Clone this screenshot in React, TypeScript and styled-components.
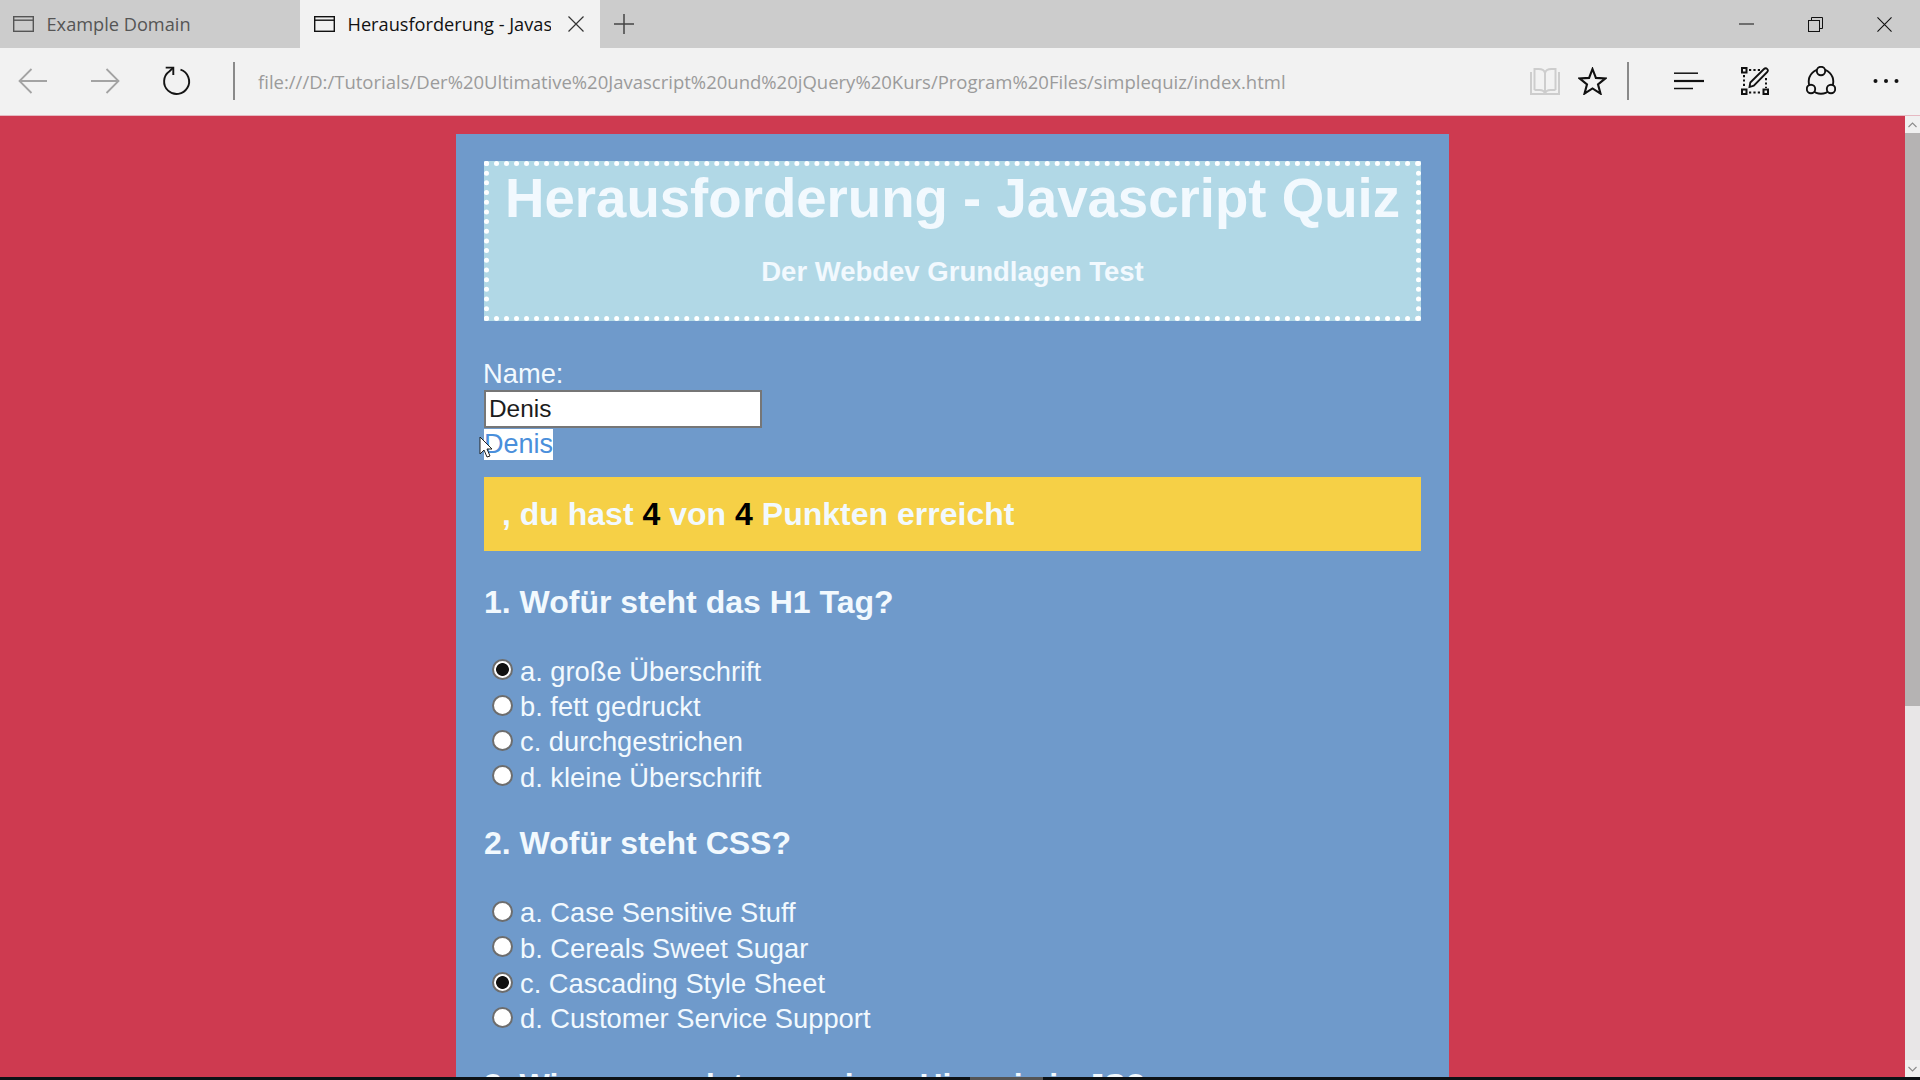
import React from "react";
import styled, { createGlobalStyle } from "styled-components";

const GlobalStyle = createGlobalStyle`
  html, body {
    margin: 0;
    height: 100%;
    overflow: hidden;
    background: #ce3a50;
  }
  * {
    box-sizing: border-box;
  }
`;

const Shell = styled.div`
  display: flex;
  flex-direction: column;
  width: 100vw;
  height: 100vh;
  overflow: hidden;
  position: relative;
`;

/* browser chrome */

const TabStrip = styled.div`
  display: flex;
  align-items: stretch;
  flex: 0 0 48px;
  background: #cccccc;
`;

const Tab = styled.div<{ $active?: boolean }>`
  display: flex;
  align-items: center;
  width: 300px;
  padding-left: ${(p) => (p.$active ? "14px" : "13px")};
  background: ${(p) => (p.$active ? "#f2f2f2" : "transparent")};
  color: ${(p) => (p.$active ? "#111111" : "#555555")};
`;

const TabTitle = styled.span`
  width: 203px;
  margin-left: 12.5px;
  overflow: hidden;
  white-space: nowrap;
  font-family: "Open Sans", "Liberation Sans", sans-serif;
  font-size: 18.2px;
`;

const TabClose = styled.span`
  display: flex;
  margin-left: 17px;
`;

const NewTab = styled.div`
  display: flex;
  align-items: center;
  margin-left: 14px;
`;

const WindowControls = styled.div`
  display: flex;
  margin-left: auto;
  padding-right: 1.5px;
`;

const WindowButton = styled.div`
  display: flex;
  align-items: center;
  justify-content: center;
  width: 69px;
`;

const Toolbar = styled.div`
  display: flex;
  align-items: center;
  flex: 0 0 68px;
  padding: 0 21px 2px 18px;
  background: #f2f2f2;
  border-bottom: 1px solid #e6b9c2;
`;

const NavGroup = styled.div`
  display: flex;
  align-items: center;
  gap: 42px;
`;

const Divider = styled.div<{ $left: number; $right: number }>`
  width: 2px;
  height: 38px;
  margin: 0 ${(p) => p.$right}px 0 ${(p) => p.$left}px;
  background: #8a8a8a;
`;

const Address = styled.div`
  flex: 1;
  padding: 2px 0 0 1px;
  color: #9b9b9b;
  font-family: "Open Sans", "Liberation Sans", sans-serif;
  font-size: 18.5px;
  white-space: nowrap;
`;

const ActionGroup = styled.div<{ $gap: number }>`
  display: flex;
  align-items: center;
  gap: ${(p) => p.$gap}px;
`;

/* page area */

const PageArea = styled.div`
  display: flex;
  flex: 1;
  min-height: 0;
`;

const Viewport = styled.div`
  flex: 1;
  min-width: 0;
  overflow: hidden;
  background: #ce3a50;
`;

const Scrollbar = styled.div`
  display: flex;
  flex-direction: column;
  flex: 0 0 15px;
  background: #e8e6e7;
`;

const ScrollButton = styled.div`
  display: flex;
  align-items: center;
  justify-content: center;
  flex: 0 0 17px;
  background: #f0f0f0;
`;

const ScrollTrack = styled.div`
  flex: 1;
`;

const ScrollThumb = styled.div`
  flex: 0 0 573px;
  background: #b5b3b3;
`;

const BottomEdge = styled.div`
  display: flex;
  flex: 0 0 3px;
  padding-left: 970px;
  background: #0d1216;
`;

const EdgeSegment = styled.div`
  width: 73px;
  background: #555555;
`;

const Panel = styled.main`
  width: 993px;
  margin: 18px auto 0;
  padding: 27px 28px 0;
  background: #6f9acb;
  color: #f2f9fe;
  font-family: "Liberation Sans", Arial, sans-serif;
`;

const Banner = styled.header`
  height: 160px;
  border: 5px dotted #ffffff;
  background: #b1d8e6;
  background-clip: border-box;
  text-align: center;
`;

const Title = styled.h1`
  margin: 0;
  padding-top: 2px;
  font-size: 54.6px;
  line-height: 62px;
  font-weight: bold;
  white-space: nowrap;
`;

const Subtitle = styled.h2`
  margin: 26px 0 0;
  font-size: 27.5px;
  line-height: 32px;
  font-weight: bold;
`;

const NameField = styled.div`
  display: flex;
  flex-direction: column;
  align-items: flex-start;
  padding-top: 36px;
  font-size: 27px;
  line-height: 33px;
`;

const NameLabel = styled.span`
  margin-left: -1px;
  font-size: 27.3px;
`;

const NameInput = styled.input`
  width: 278px;
  height: 38px;
  padding: 0 3px;
  border: 2px solid #767676;
  background: #ffffff;
  color: #1c1c1c;
  font-family: "Liberation Sans", Arial, sans-serif;
  font-size: 24.4px;
  outline: none;
`;

const SelectedName = styled.span`
  background: #ffffff;
  color: #4a8fdb;
  line-height: 31px;
  margin-top: 1px;
`;

const Score = styled.div`
  display: flex;
  align-items: center;
  gap: 0.28em;
  height: 74px;
  margin: 17px 0 30.5px;
  padding-left: 18px;
  background: #f6d046;
  font-size: 32px;
  font-weight: bold;
  white-space: pre;
`;

const ScoreValue = styled.span`
  color: #000000;
`;

const Question = styled.section`
  margin-top: 27.5px;
`;

const QuestionTitle = styled.h3`
  margin: 0 0 32.5px;
  font-size: 32px;
  line-height: 40px;
  font-weight: bold;
  white-space: nowrap;
`;

const Options = styled.div`
  display: flex;
  flex-direction: column;
`;

const Option = styled.label`
  display: flex;
  align-items: center;
  gap: 7px;
  height: 35.4px;
  padding-left: 8px;
  font-size: 27.3px;
  white-space: nowrap;
`;

const Radio = styled.input`
  appearance: none;
  flex: 0 0 21px;
  width: 21px;
  height: 21px;
  margin: 0 0 4px;
  border: 2px solid #6d6d6d;
  border-radius: 50%;
  background: #ffffff;

  &:checked {
    background: radial-gradient(circle, #111111 0 6px, #ffffff 6.8px);
  }
`;

const Cursor = styled.svg`
  position: absolute;
  left: 479px;
  top: 436px;
`;

/* icons */

const TabIcon = ({ color }: { color: string }) => (
  <svg width="21" height="16" viewBox="0 0 21 16" fill="none" stroke={color} strokeWidth="1.4">
    <rect x="0.7" y="0.7" width="19.6" height="14.6" />
    <path d="M0.7 4.2h19.6" />
  </svg>
);

const Cross = ({ size, color }: { size: number; color: string }) => (
  <svg width={size} height={size} viewBox="0 0 16 16" fill="none" stroke={color} strokeWidth="1.2">
    <path d="M0.5 0.5l15 15M15.5 0.5l-15 15" />
  </svg>
);

const Arrow = ({ flip }: { flip?: boolean }) => (
  <svg
    width="30"
    height="26"
    viewBox="0 0 30 26"
    fill="none"
    stroke="#a3a3a3"
    strokeWidth="1.8"
    style={flip ? { transform: "scaleX(-1)" } : undefined}
  >
    <path d="M29 13H2M13.5 1L1.5 13l12 12" />
  </svg>
);

const Refresh = () => (
  <svg width="30" height="30" viewBox="0 0 30 30" fill="none" stroke="#151515" strokeWidth="1.9">
    <path d="M18.5 3.6A12.5 12.5 0 1 1 7.5 5.2L11.3 1.6" />
    <path d="M3.7 1.6h7.6v7.5" />
  </svg>
);

const Book = () => (
  <svg width="30" height="28" viewBox="0 0 30 28" fill="none" stroke="#cdcdcd" strokeWidth="2">
    <path d="M1 5v22h28V5" />
    <path d="M4.5 23V2h4c3.5 0 6 1.5 6.5 4v21M25.5 23V2h-4c-3.5 0-6 1.5-6.5 4" />
    <path d="M4.5 23h5c3 0 5 1 5.5 4M25.5 23h-5c-3 0-5 1-5.5 4" />
  </svg>
);

const Star = () => (
  <svg width="29" height="28" viewBox="0 0 29 28" fill="none" stroke="#111111" strokeWidth="2.1">
    <path d="M14.5 2l3.4 8.9 9.5 0.5-7.4 6 2.5 9.2-8-5.2-8 5.2 2.5-9.2-7.4-6 9.5-0.5z" />
  </svg>
);

const Hub = () => (
  <svg width="30" height="18" viewBox="0 0 30 18" fill="none" stroke="#111111">
    <path d="M0 1.2h24" strokeWidth="1.5" />
    <path d="M0 9h30" strokeWidth="2.2" />
    <path d="M0 16.5h19" strokeWidth="1.5" />
  </svg>
);

const WebNote = () => (
  <svg width="28" height="28" viewBox="0 0 28 28" fill="none" stroke="#111111">
    <path d="M8 3h11M3 8v13M8 25.5h12M25 11v10" strokeWidth="2" strokeDasharray="2.2 2.2" />
    <rect x="1" y="1" width="4.5" height="4.5" strokeWidth="2" />
    <rect x="1" y="22.5" width="4.5" height="4.5" strokeWidth="2" />
    <rect x="22.5" y="22.5" width="4.5" height="4.5" strokeWidth="2" />
    <path d="M8.5 20l0.8-4.5L23 2c1-1 2.3-1 3.2 0s0.8 2.2 0 3L12.8 18.7z" strokeWidth="1.8" />
  </svg>
);

const Share = () => (
  <svg width="30" height="29" viewBox="0 0 30 29" fill="none" stroke="#111111" strokeWidth="1.9">
    <circle cx="15" cy="15.5" r="12.3" />
    <circle cx="15" cy="5" r="4.2" fill="#f2f2f2" />
    <circle cx="5" cy="23" r="4.2" fill="#f2f2f2" />
    <circle cx="25" cy="23" r="4.2" fill="#f2f2f2" />
  </svg>
);

const Dots = () => (
  <svg width="26" height="6" viewBox="0 0 26 6" fill="#111111">
    <circle cx="2.5" cy="3" r="2" />
    <circle cx="13" cy="3" r="2" />
    <circle cx="23.5" cy="3" r="2" />
  </svg>
);

const Chevron = ({ down }: { down?: boolean }) => (
  <svg width="9" height="6" viewBox="0 0 9 6" fill="none" stroke="#8b8b8b" strokeWidth="1.1">
    <path d={down ? "M0.5 1l4 4 4-4" : "M0.5 5l4-4 4 4"} />
  </svg>
);

const questions = [
  {
    title: "1. Wofür steht das H1 Tag?",
    answer: 0,
    options: ["a. große Überschrift", "b. fett gedruckt", "c. durchgestrichen", "d. kleine Überschrift"],
  },
  {
    title: "2. Wofür steht CSS?",
    answer: 2,
    options: ["a. Case Sensitive Stuff", "b. Cereals Sweet Sugar", "c. Cascading Style Sheet", "d. Customer Service Support"],
  },
  {
    title: "3. Wie verwendet man einen Hinweis in JS?",
    answer: -1,
    options: [],
  },
];

export default function App() {
  return (
    <Shell>
      <GlobalStyle />
      <TabStrip>
        <Tab>
          <TabIcon color="#555555" />
          <TabTitle>Example Domain</TabTitle>
        </Tab>
        <Tab $active>
          <TabIcon color="#111111" />
          <TabTitle>Herausforderung - Javascript Quiz</TabTitle>
          <TabClose>
            <Cross size={16} color="#333333" />
          </TabClose>
        </Tab>
        <NewTab>
          <svg width="20" height="20" viewBox="0 0 20 20" fill="none" stroke="#444444" strokeWidth="1.5">
            <path d="M10 0v20M0 10h20" />
          </svg>
        </NewTab>
        <WindowControls>
          <WindowButton>
            <svg width="15" height="2" viewBox="0 0 15 2" stroke="#111111">
              <path d="M0 1h15" />
            </svg>
          </WindowButton>
          <WindowButton>
            <svg width="15" height="15" viewBox="0 0 15 15" fill="none" stroke="#111111">
              <rect x="0.5" y="3.5" width="11" height="11" />
              <path d="M3.5 3.5v-3h11v11h-3" />
            </svg>
          </WindowButton>
          <WindowButton>
            <Cross size={15} color="#111111" />
          </WindowButton>
        </WindowControls>
      </TabStrip>

      <Toolbar>
        <NavGroup>
          <Arrow />
          <Arrow flip />
          <Refresh />
        </NavGroup>
        <Divider $left={41} $right={22} />
        <Address>file:///D:/Tutorials/Der%20Ultimative%20Javascript%20und%20jQuery%20Kurs/Program%20Files/simplequiz/index.html</Address>
        <ActionGroup $gap={18}>
          <Book />
          <Star />
        </ActionGroup>
        <Divider $left={20} $right={45} />
        <ActionGroup $gap={37}>
          <Hub />
          <WebNote />
          <Share />
          <Dots />
        </ActionGroup>
      </Toolbar>

      <PageArea>
        <Viewport>
          <Panel>
            <Banner>
              <Title>Herausforderung - Javascript Quiz</Title>
              <Subtitle>Der Webdev Grundlagen Test</Subtitle>
            </Banner>
            <NameField>
              <NameLabel>Name:</NameLabel>
              <NameInput value="Denis" readOnly />
              <SelectedName>Denis</SelectedName>
            </NameField>
            <Score>
              <span>, du hast</span>
              <ScoreValue>4</ScoreValue>
              <span>von</span>
              <ScoreValue>4</ScoreValue>
              <span>Punkten erreicht</span>
            </Score>
            {questions.map((q) => (
              <Question key={q.title}>
                <QuestionTitle>{q.title}</QuestionTitle>
                <Options>
                  {q.options.map((text, i) => (
                    <Option key={text}>
                      <Radio type="radio" name={q.title} checked={i === q.answer} readOnly />
                      {text}
                    </Option>
                  ))}
                </Options>
              </Question>
            ))}
          </Panel>
        </Viewport>
        <Scrollbar>
          <ScrollButton>
            <Chevron />
          </ScrollButton>
          <ScrollThumb />
          <ScrollTrack />
          <ScrollButton>
            <Chevron down />
          </ScrollButton>
        </Scrollbar>
      </PageArea>
      <BottomEdge>
        <EdgeSegment />
      </BottomEdge>

      <Cursor width="13" height="22" viewBox="0 0 13 22">
        <path d="M1 1v17l4-4 3 7 3-1-3-7h5z" fill="#ffffff" stroke="#222222" strokeWidth="1" />
      </Cursor>
    </Shell>
  );
}
